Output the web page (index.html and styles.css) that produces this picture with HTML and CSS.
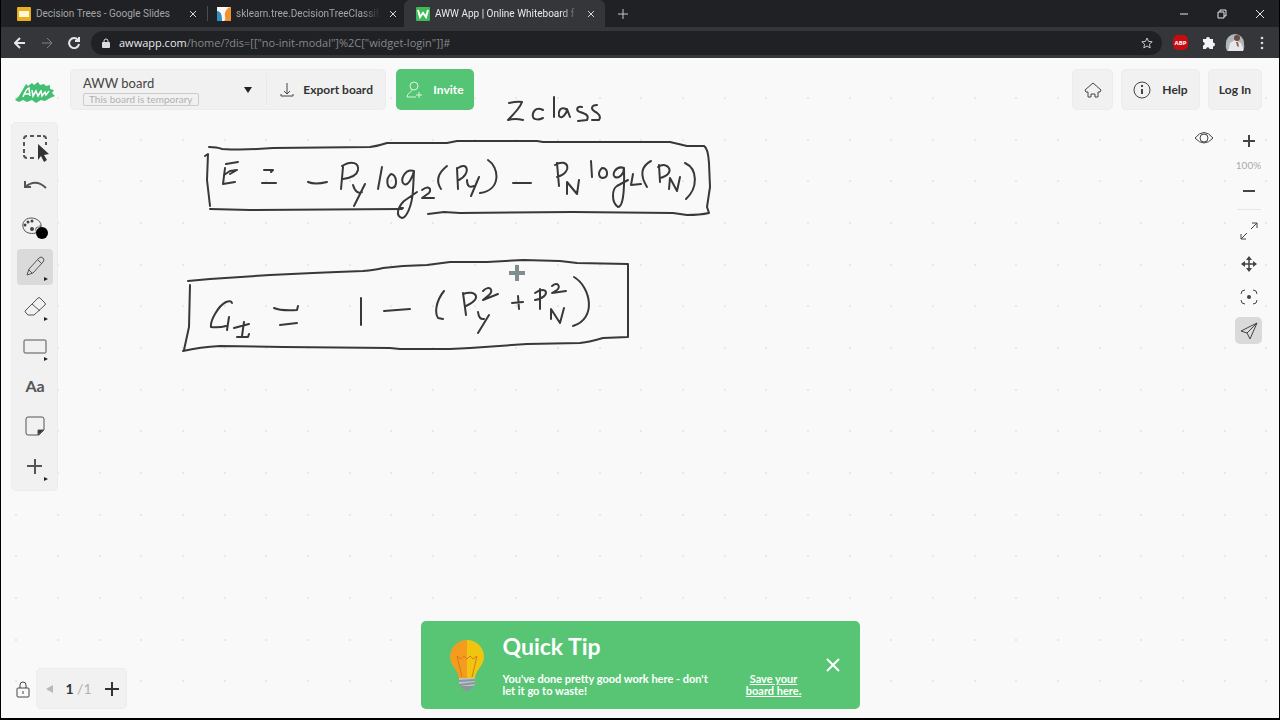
FILE: index.html
```html
<!DOCTYPE html>
<html lang="en">
<head>
<meta charset="utf-8">
<title>AWW App | Online Whiteboard</title>
<link rel="stylesheet" href="styles.css">
</head>
<body>
<div class="window">
  <header class="browser">
    <div class="tabstrip">
      <div class="tab">
        <svg class="favicon" viewBox="0 0 14 14"><rect width="14" height="14" rx="1" fill="#e9af1d"/><rect x="2" y="4" width="10" height="6" fill="#fff6d5"/></svg>
        <span class="tab-title">Decision Trees - Google Slides</span>
        <button class="tab-close" aria-label="Close tab"><svg viewBox="0 0 8 8"><path d="M1 1l6 6M7 1L1 7"/></svg></button>
      </div>
      <div class="tab divided">
        <svg class="favicon" viewBox="0 0 14 14"><rect width="14" height="14" fill="#f7f7f2"/><path d="M0 4c4 0 5 4 5 10H0z" fill="#2f8fc4"/><path d="M14 0v14H7c3-2 0-5 1-8s3-6 6-6z" fill="#ef922f"/><path d="M3 0h5L5 7 2 4z" fill="#fff"/></svg>
        <span class="tab-title fade">sklearn.tree.DecisionTreeClassifi</span>
        <button class="tab-close" aria-label="Close tab"><svg viewBox="0 0 8 8"><path d="M1 1l6 6M7 1L1 7"/></svg></button>
      </div>
      <div class="tab active">
        <svg class="favicon" viewBox="0 0 14 14"><rect width="14" height="14" rx="1" fill="#3dbb57"/><path d="M2 3l2 7 3-4 3 4 2-7" fill="none" stroke="#fff" stroke-width="2"/></svg>
        <span class="tab-title fade">AWW App | Online Whiteboard f</span>
        <button class="tab-close" aria-label="Close tab"><svg viewBox="0 0 8 8"><path d="M1 1l6 6M7 1L1 7"/></svg></button>
      </div>
      <button class="new-tab" aria-label="New tab"><svg viewBox="0 0 12 12"><path d="M6 1v10M1 6h10"/></svg></button>
      <div class="window-controls">
        <button aria-label="Minimize"><svg viewBox="0 0 10 10"><path d="M1 5h8"/></svg></button>
        <button aria-label="Restore"><svg viewBox="0 0 10 10"><path d="M1 3h6v6H1zM3 3V1h6v6H7"/></svg></button>
        <button aria-label="Close"><svg viewBox="0 0 10 10"><path d="M1 1l8 8M9 1L1 9"/></svg></button>
      </div>
    </div>
    <div class="navbar">
      <button class="nav-btn" aria-label="Back"><svg viewBox="0 0 12 12"><path d="M11 6H1M6 1L1 6l5 5"/></svg></button>
      <button class="nav-btn dim" aria-label="Forward"><svg viewBox="0 0 12 12"><path d="M1 6h10M6 1l5 5-5 5"/></svg></button>
      <button class="nav-btn" aria-label="Reload"><svg viewBox="0 0 12 12"><path d="M10 3a5 5 0 1 0 1 4M11 0v4H7"/></svg></button>
      <div class="omnibox">
        <svg class="padlock" viewBox="0 0 8 10"><path d="M2 5V3a2 2 0 0 1 4 0v2" fill="none" stroke="#dadce0" stroke-width="1"/><rect x="0" y="4" width="8" height="6" rx="1" fill="#dadce0"/></svg>
        <span class="url"><b>awwapp.com</b>/home/?dis=[["no-init-modal"]%2C["widget-login"]]#</span>
        <button class="star" aria-label="Bookmark"><svg viewBox="0 0 12 12"><path d="M6 1l1.5 3.4 3.7.4-2.8 2.4.8 3.7L6 9l-3.200 1.900.8-3.700L.8 4.800l3.700-.4z"/></svg></button>
      </div>
      <div class="extensions">
        <button class="abp" aria-label="Adblock Plus">ABP</button>
        <button aria-label="Extensions"><svg viewBox="0 0 14 14"><path d="M2 3h3a2 2 0 1 1 4 0h3v3.500a2 2 0 1 1 0 4V13H8.500a1.700 1.700 0 1 0-3.400 0H2V9.500a1.700 1.700 0 1 0 0-3.400z" fill="#f1f3f4"/></svg></button>
        <button aria-label="Profile"><svg class="avatar" viewBox="0 0 20 18"><clipPath id="face"><path d="M2 17Q0 13 1 9a9 9 0 0 1 18 0q1 4-1 8z"/></clipPath><g clip-path="url(#face)"><rect width="20" height="18" fill="#aeb8b6"/><path d="M3 18l2-9 5-3 6 3 4 9z" fill="#e9e6ea"/><circle cx="12" cy="4" r="3" fill="#6b4a43"/><path d="M11 8l2 0 1 5-2-1z" fill="#8f5e55"/></g></svg></button>
        <button aria-label="Menu"><svg viewBox="0 0 14 14" fill="#dadce0"><circle cx="7" cy="2" r="1.300"/><circle cx="7" cy="7" r="1.300"/><circle cx="7" cy="12" r="1.300"/></svg></button>
      </div>
    </div>
  </header>

  <main class="board">
    <svg class="canvas" aria-label="Whiteboard drawing">
      <defs>
        <pattern id="dots" width="125" height="125" x="57" y="97" patternUnits="userSpaceOnUse">
          <path d="M0 0h2v2H0zM42 0h2v2h-2zM83 0h2v2h-2zM0 42h2v2H0zM42 42h2v2h-2zM83 42h2v2h-2zM0 83h2v2H0zM42 83h2v2h-2zM83 83h2v2h-2z" fill="#e8e8e8"/>
        </pattern>
      </defs>
      <g transform="translate(-1 -58)">
        <rect width="100%" height="200%" fill="url(#dots)"/>
        <g class="ink">
          <path d="M509 103Q518 101 522 102Q520 108 508 120Q515 118 523 120"/>
          <path d="M543 110C535 106 532 113 533 117C534 120 539 120 543 118M554 97V117M566 109C560 106 558 112 559 116C562 120 567 113 567 109L570 117"/>
          <path d="M582 107C576 106 576 111 580 112C587 114 589 116 587 120L578 121M597 105C591 105 591 109 594 111C600 114 601 117 599 120L592 120"/>
          <path d="M209 147Q217 147 222 149Q240 150 257 149L273 148L370 147Q378 146 387 143L447 143L457 141L537 141L543 142L670 142L687 146L704 146Q708 148 709 163L710 187L707 207L709 213Q700 215 687 215L673 213L573 212L460 213L444 212L428 214"/>
          <path d="M205 156L208 154L207 180L210 206M210 209L250 210L402 209"/>
          <path d="M226 164L238 162M225 168L223 184L235 182M224 175L230 171L237 170L230 174M264 170L273 170L271 172M262 183H276M308 182Q315 185 327 182"/>
          <path d="M343 167L341 189M342 166C352 160 359 163 358 170C357 175 350 178 343 179M353 185C355 192 359 194 362 192M365 184L354 206"/>
          <path d="M382 167L378 189M391 174C385 179 387 188 392 188C398 187 397 175 391 174M414 171C405 168 399 181 404 184C408 187 413 176 414 171L413 190C412 207 406 218 402 218C395 216 398 207 404 201L417 192"/>
          <path d="M400 208H403M422 190C429 185 432 189 429 193L422 198L434 198M447 166Q433 177 441 189"/>
          <path d="M457 168L458 189M458 168C468 161 471 174 459 180M467 180Q467 189 474 186M479 177L471 196M488 160C499 167 502 190 480 193M513 183H531"/>
          <path d="M557 163L559 186M555 165C568 157 574 172 557 177M567 194V182L577 194L579 180M591 161L592 177M602 168C597 173 599 178 603 178C609 177 608 168 602 168"/>
          <path d="M624 168C616 165 611 175 615 177C619 179 624 174 624 168Q625 207 618 207C611 202 612 189 617 186L628 180M633 174L631 185L641 184M651 161Q636 169 647 187"/>
          <path d="M659 165L660 182M658 167C668 160 677 174 660 178M669 189L670 178L677 191L680 177M685 163C698 169 698 188 686 199"/>
          <path d="M188 281L210 279L270 275L313 273L337 272L363 271Q375 270 383 268L403 266L427 265L450 262L487 262L523 260L560 261L577 263L628 264V337L603 338Q590 342 580 343L527 344L470 348L450 349L400 349L390 348L283 347L220 346Q200 347 183 351M190 285L189 327L184 350"/>
          <path d="M232 303Q231 300 226 302C218 306 210 321 211 327Q219 328 226 326M229 317L227 330M234 328L249 324M244 322L242 336M237 337L248 337L249 334M274 308Q281 311 297 310L298 306M280 325L297 323M361 298V325M384 311L410 309"/>
          <path d="M444 291C435 302 435 314 438 318L443 319M463 293L466 315M463 294C476 289 483 299 466 306M478 312Q479 320 484 319M489 315L478 333M483 291C490 284 494 291 489 295L483 300L498 294M512 303L523 302M518 296L519 309"/>
          <path d="M540 289V309M535 293C547 284 552 297 535 300M552 286C558 281 561 287 557 290L552 293L566 291M551 319V309L560 323L564 308M574 277C591 287 597 319 573 326"/>
        </g>
        <path class="pen-cursor" d="M517 265v16M509 273h16"/>
      </g>
    </svg>

    <div class="topbar">
      <svg class="logo" viewBox="0 0 42 22"><path d="M1 19L5 15L8 10L12 3L14 5L18 2L20 4L24 1L26 4L30 3L32 5L36 4L36 8L40 9L38 12L41 15L36 17L31 20L27 19L22 22L18 19L13 21L9 19L5 21Z" fill="#43bf72"/><path d="M9 16Q12 8 15 7L16 15M11 13h5M18 9l1 6 3-5 2 5 3-5M27 9l1 6 3-4 1 3 3-4" fill="none" stroke="#fff" stroke-width="1.500"/></svg>
      <div class="board-card">
        <button class="board-name">
          <span class="name-text"><span>AWW board</span><span class="badge">This board is temporary</span></span>
          <svg class="caret" viewBox="0 0 8 6"><path d="M0 0h8L4 6z"/></svg>
        </button>
        <button class="export">
          <svg class="line-icon small" viewBox="0 0 14 16"><path d="M7 1v11M4 9l3 3 3-3M1 12v2h12v-2"/></svg>
          <span>Export board</span>
        </button>
      </div>
      <button class="invite">
        <svg class="line-icon light" viewBox="0 0 18 18"><circle cx="8" cy="5" r="4"/><path d="M6 9c0 2-5 3-5 7h9M13 11v6M10 14h6"/></svg>
        <span>Invite</span>
      </button>
      <span class="spacer"></span>
      <button class="pill home" aria-label="Home"><svg class="line-icon" viewBox="0 0 18 18"><path d="M1 9l8-7 8 7-1 2h-2v5h-3v-3H7v3H4v-5H2z"/></svg></button>
      <button class="pill help"><svg class="line-icon" viewBox="0 0 18 18"><circle cx="9" cy="9" r="8"/><path d="M9 8v5M9 4v2" stroke-width="2"/></svg><span>Help</span></button>
      <button class="pill login">Log In</button>
    </div>

    <div class="middle">
      <nav class="tools" aria-label="Tools">
        <button aria-label="Select"><svg viewBox="0 0 28 28"><path d="M3 6q0-3 3-3M9 3h4M16 3h4M22 3q3 0 3 3M3 9v4M3 16v4M3 22q0 3 3 3M9 25h4M25 9v3" stroke-width="2"/><path d="M17 11l11 10-5 1 3 5-3 2-3-6-3 4z" fill="#333" stroke="none"/></svg></button>
        <button aria-label="Undo"><svg viewBox="0 0 28 28"><path d="M4 8v6h6M4 14q11-9 21 1" stroke-width="2"/></svg></button>
        <button aria-label="Colour"><svg viewBox="0 0 28 28"><path d="M19 12c0 3 2 2 1 4-2 5-12 6-16 2C-1 12 3 5 10 5c6 0 11 4 10 9-2 1-3-1-5 1-1 2 1 3 0 5"/><g fill="#444" stroke="none"><circle cx="4" cy="12" r="1.500"/><circle cx="7" cy="9" r="1.500"/><circle cx="11" cy="8" r="1.500"/><circle cx="11" cy="16" r="2"/></g><circle cx="21" cy="20" r="6" fill="#000" stroke="none"/></svg></button>
        <button class="selected more" aria-label="Pencil"><svg viewBox="0 0 28 28"><path d="M6 22l2-6L18 5q2-2 4 0t0 4L12 20zM17 7l4 4M8 17l3 3"/></svg></button>
        <button class="more" aria-label="Eraser"><svg viewBox="0 0 28 28"><path d="M5 17L17 5q1-1 2 0l5 5q1 1 0 2L13 22H7l-2-2q-2-2 0-3zM11 11l8 7"/></svg></button>
        <button class="more" aria-label="Shape"><svg viewBox="0 0 28 28"><rect x="3" y="7" width="22" height="13" rx="1"/></svg></button>
        <button class="text-tool" aria-label="Text">Aa</button>
        <button aria-label="Note"><svg viewBox="0 0 28 28"><path d="M7 4h14q2 0 2 2v11l-5 5H7q-2 0-2-2V6q0-2 2-2z"/><path d="M17 22v-5h6z" fill="#333"/></svg></button>
        <button class="more" aria-label="Add"><svg viewBox="0 0 28 28"><path d="M14 6v15M6 13h15" stroke-width="2"/></svg></button>
      </nav>
      <div class="view">
        <button class="eye" aria-label="Presentation view"><svg class="line-icon" viewBox="0 0 20 14"><path d="M1 7q9-11 18 0-9 10-18 0z"/><circle cx="10" cy="7" r="4"/></svg></button>
        <div class="zoom">
          <button aria-label="Zoom in"><svg viewBox="0 0 18 18"><path d="M9 3v12M3 9h12" stroke-width="2"/></svg></button>
          <span class="zoom-level">100%</span>
          <button aria-label="Zoom out"><svg viewBox="0 0 18 18"><path d="M3 9h12" stroke-width="2"/></svg></button>
          <hr>
          <button class="big" aria-label="Fit"><svg viewBox="0 0 18 18"><path d="M11 7l6-6M12 1h5v5M7 11l-6 6M1 12v5h5"/></svg></button>
          <button class="big" aria-label="Pan"><svg viewBox="0 0 18 18"><path d="M9 2v14M2 9h14" stroke-width="1.500"/><path d="M9 1l3 4H6zM9 17l3-4H6zM1 9l4-3v6zM17 9l-4-3v6z" fill="#444" stroke="none"/></svg></button>
          <button class="big" aria-label="Center"><svg viewBox="0 0 18 18"><path d="M1 6q0-4 4-4M13 2q4 0 4 4M1 12q0 4 4 4M13 16q4 0 4-4"/><circle cx="9" cy="9" r="2" fill="#444" stroke="none"/></svg></button>
          <button class="big selected" aria-label="Follow"><svg viewBox="0 0 18 18"><path d="M17 1L1 9l6 2 3 6z"/><path d="M17 1L7 11"/></svg></button>
        </div>
      </div>
    </div>

    <div class="bottombar">
      <div class="pages">
        <button class="lock" aria-label="Lock"><svg class="line-icon" viewBox="0 0 14 18"><rect x="1" y="8" width="12" height="9" rx="1"/><path d="M4 8V5a3 3 0 0 1 6 0v3M7 11v3"/></svg></button>
        <div class="pager">
          <button aria-label="Previous page"><svg viewBox="0 0 7 8"><path d="M7 0v8L0 4z" fill="#b9b9b9"/></svg></button>
          <span class="page-count"><b>1</b> /1</span>
          <button aria-label="Add page"><svg class="plus" viewBox="0 0 16 16"><path d="M8 1v14M1 8h14"/></svg></button>
        </div>
      </div>
      <aside class="tip">
        <svg class="bulb" viewBox="0 0 36 52"><path d="M18 1A17 17 0 0 0 1 18c0 9 8 12 9 21h8z" fill="#f39c1f"/><path d="M18 1a17 17 0 0 1 17 17c0 9-8 12-9 21h-8z" fill="#f1c40f"/><path d="M13 38L8 17l4 3 3-3 3 3 3-3 3 3 4-3-5 21" fill="none" stroke="#d87916" stroke-width="1"/><path d="M10 39h16v7q-8 3-16 0z" fill="#bdc3c7"/><path d="M10 42l16-1M10 46l16-2" stroke="#8b979d" stroke-width="2"/><path d="M12 47h12q-2 5-6 5t-6-5z" fill="#8b979d"/></svg>
        <div class="tip-body">
          <h2>Quick Tip</h2>
          <div class="tip-row">
            <p>You've done pretty good work here - don't let it go to waste!</p>
            <a href="#">Save your board here.</a>
          </div>
        </div>
        <button class="tip-close" aria-label="Close tip"><svg viewBox="0 0 14 14"><path d="M1 1l12 12M13 1L1 13"/></svg></button>
      </aside>
    </div>
  </main>
</div>
</body>
</html>
```
FILE: styles.css
```css
* { box-sizing: border-box; }

body {
  margin: 0;
  background: #000;
  font-family: Lato, "Open Sans", sans-serif;
  color: #333;
}

button {
  margin: 0;
  padding: 0;
  border: 0;
  background: none;
  color: inherit;
  font: inherit;
  display: flex;
  align-items: center;
  justify-content: center;
}

svg { display: block; flex: none; }

.window {
  min-height: 100vh;
  padding: 0 1px 2px;
  display: flex;
  flex-direction: column;
}

/* Browser frame */
.browser {
  background: #202124;
  color: #e4e6e8;
  font-family: "Open Sans", "Noto Sans", sans-serif;
}
.browser button svg { fill: none; stroke: currentColor; }

.tabstrip { display: flex; height: 27px; }
.tab {
  width: 200px;
  padding: 0 0 0 16px;
  display: flex;
  align-items: center;
  gap: 5px;
  color: #a2a5a9;
  font-family: Roboto, "Open Sans", sans-serif;
  font-size: 10px;
}
.tab.divided { background: linear-gradient(#4a4c50, #4a4c50) 6px 6px / 1px 15px no-repeat; }
.tab.active {
  width: 201px;
  margin-left: 3px;
  background: #35363a;
  border-radius: 6px 6px 0 0;
  color: #e8eaed;
  padding: 0 6px 0 12px;
}
.favicon { width: 14px; height: 14px; }
.tab-title { flex: 1; min-width: 0; overflow: hidden; white-space: nowrap; }
.fade { mask-image: linear-gradient(90deg, #000 88%, transparent); }
.tab-close { width: 16px; height: 16px; color: #d5d7da; }
.tab-close svg { width: 8px; height: 8px; }
.new-tab { width: 36px; color: #c5c7ca; }
.new-tab svg { width: 12px; height: 12px; }
.window-controls { margin-left: auto; display: flex; align-items: center; }
.window-controls button { width: 38px; height: 24px; }
.window-controls svg { width: 10px; height: 10px; }

.navbar {
  height: 31px;
  display: flex;
  align-items: center;
  background: #35363a;
  padding-left: 5px;
}
.nav-btn { width: 27px; height: 27px; }
.nav-btn svg { width: 12px; height: 12px; stroke-width: 2; }
.dim { color: #7d8084; }
.dim svg { stroke-width: 1; }
.omnibox {
  flex: 1;
  min-width: 0;
  height: 24px;
  margin-left: 4px;
  padding: 0 9px 0 11px;
  border-radius: 12px;
  background: #202124;
  display: flex;
  align-items: center;
  gap: 9px;
  font-size: 11px;
  color: #85888c;
}
.padlock { width: 8px; height: 10px; }
.url { flex: 1; min-width: 0; overflow: hidden; white-space: nowrap; }
.url b { font-weight: 400; color: #e8eaed; }
.star { color: #c4c7ca; }
.star svg { width: 12px; height: 12px; }
.extensions { display: flex; align-items: center; padding: 0 4px 0 5px; }
.extensions button { width: 27px; height: 27px; }
.extensions button svg { width: 14px; height: 14px; stroke: none; }
.extensions button:last-child svg { fill: #dadce0; }
.extensions button .avatar { width: 20px; height: 18px; }
.extensions .abp {
  width: 15px;
  height: 15px;
  margin: 0 6px;
  border-radius: 5px;
  background: #c70d12;
  color: #fff;
  font-size: 6px;
  font-weight: 700;
}

/* Board */
.board {
  position: relative;
  flex: 1;
  display: flex;
  flex-direction: column;
  background: #f9f9f9;
  padding: 11px 17px 9px 10px;
}
.canvas { position: absolute; inset: 0; width: 100%; height: 100%; }
.ink { fill: none; stroke: #383838; stroke-width: 2; stroke-linecap: round; stroke-linejoin: round; }
.pen-cursor { stroke: #7f8f90; stroke-width: 4; }
.topbar, .middle, .bottombar { position: relative; display: flex; }

.line-icon { width: 18px; height: 18px; fill: none; stroke: #444; stroke-width: 1; }
.line-icon.small { width: 14px; height: 16px; }
.line-icon.light { stroke: #d9f3e0; }

.topbar { height: 41px; align-items: stretch; font-size: 12px; font-weight: 700; }
.logo { width: 42px; height: 22px; margin: 12px 14px 0 3px; }
.board-card, .pill, .tools, .pager {
  background: #f1f1f1;
  border: 1px solid #ececec;
  border-radius: 5px;
}
.board-card { width: 316px; display: flex; }
.board-name {
  flex: 1;
  margin: 4px 0;
  padding: 0 14px 0 12px;
  justify-content: space-between;
  border-right: 1px solid #e8e8e8;
  font-size: 13px;
  font-weight: 400;
  text-align: left;
}
.name-text { display: flex; flex-direction: column; align-items: flex-start; gap: 2px; padding-top: 2px; line-height: 16px; color: #444; }
.badge { border: 1px solid #ccc; border-radius: 2px; padding: 0 5px; font-size: 10px; line-height: 11px; color: #b0b0b0; }
.caret { width: 8px; height: 6px; fill: #222; }
.export { width: 118px; padding: 0 12px 0 13px; justify-content: space-between; }
.invite { width: 78px; margin-left: 10px; gap: 9px; border-radius: 5px; background: #56c475; color: #fff; }
.spacer { flex: 1; }
.pill { margin-left: 8px; }
.home { width: 41px; }
.help { width: 79px; gap: 11px; }
.login { width: 54px; }

.middle { flex: 1; justify-content: space-between; align-items: flex-start; padding-top: 12px; }
.tools { display: flex; flex-direction: column; gap: 4px; padding: 6px 4px 5px 5px; }
.tools button { width: 36px; height: 36px; border-radius: 4px; }
.tools svg { width: 28px; height: 28px; fill: none; stroke: #555; stroke-width: 1; overflow: visible; }
.tools .more { position: relative; }
.tools .more::after {
  content: "";
  position: absolute;
  right: 5px;
  bottom: 4px;
  border: 2px solid transparent;
  border-left: 4px solid #222;
  border-right: 0;
}
.tools .selected, .zoom .selected { background: #dadada; }
.tools .text-tool { padding-bottom: 3px; font-size: 16px; font-weight: 700; color: #555; }

.view { display: flex; align-items: flex-start; gap: 21px; padding-top: 5px; }
.eye { height: 22px; }
.eye svg { width: 20px; height: 14px; }
.zoom { display: flex; flex-direction: column; align-items: center; width: 27px; }
.zoom button { width: 27px; height: 27px; border-radius: 5px; }
.zoom .big { margin-bottom: 6px; }
.zoom .big.selected { margin-top: 1px; }
.zoom svg { width: 18px; height: 18px; fill: none; stroke: #444; stroke-width: 1; }
.zoom-level { font-size: 10px; line-height: 23px; color: #aaa; }
.zoom hr { width: 24px; margin: 5px 0 7px; border: 0; border-top: 1px solid #e6e6e6; }

.bottombar { display: grid; grid-template-columns: 1fr minmax(0, 439px) 1fr; align-items: end; margin-right: -7px; }
.pages { display: flex; align-items: center; gap: 5px; }
.lock { width: 20px; padding-left: 4px; }
.lock svg { width: 14px; height: 18px; }
.pager { height: 41px; width: 91px; display: flex; align-items: center; justify-content: space-between; padding: 0 6px 0 9px; }
.pager svg { width: 7px; height: 8px; }
.pager .plus { width: 16px; height: 16px; stroke: #333; stroke-width: 2; }
.page-count { font-size: 14px; color: #b0b0b0; white-space: nowrap; }
.page-count b { color: #333; }

.tip {
  min-height: 88px;
  display: flex;
  align-items: center;
  padding: 0 20px 0 28px;
  border-radius: 5px;
  background: #58c575;
  color: #fff;
}
.bulb { width: 36px; height: 52px; }
.tip-body { flex: 1; margin-left: 18px; }
.tip h2 { margin: 0 0 14px; font-size: 23px; line-height: 26px; }
.tip-row { display: flex; justify-content: space-between; font-size: 11px; line-height: 12px; font-weight: 700; }
.tip p { margin: 0; width: 220px; }
.tip a { width: 64px; color: inherit; text-align: center; }
.tip-close { margin-left: 20px; }
.tip-close svg { width: 14px; height: 14px; stroke: #fff; stroke-width: 2; }
```
